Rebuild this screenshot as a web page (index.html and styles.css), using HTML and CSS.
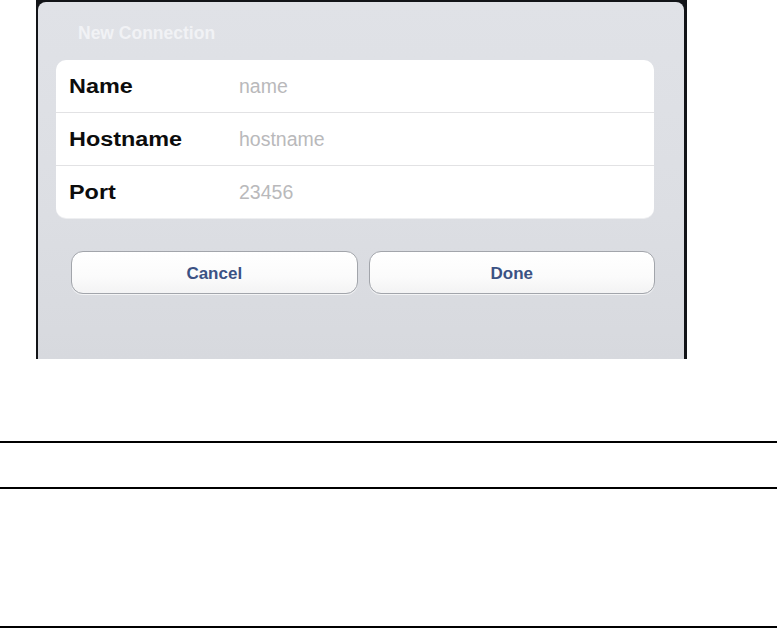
FILE: index.html
```html
<!DOCTYPE html>
<html>
<head>
<meta charset="utf-8">
<link rel="stylesheet" href="styles.css">
</head>
<body>
<div class="page">
  <div class="shot">
    <div class="panel">
      <div class="title">New Connection</div>
      <div class="group">
        <div class="row">
          <span class="label">Name</span>
          <span class="value">name</span>
        </div>
        <div class="row">
          <span class="label">Hostname</span>
          <span class="value">hostname</span>
        </div>
        <div class="row">
          <span class="label">Port</span>
          <span class="value">23456</span>
        </div>
      </div>
      <div class="buttons">
        <div class="btn">Cancel</div>
        <div class="btn">Done</div>
      </div>
    </div>
  </div>
  <div class="rule rule-1"></div>
  <div class="rule rule-2"></div>
  <div class="rule rule-3"></div>
</div>
</body>
</html>
```

FILE: styles.css
```css
html, body {
  margin: 0;
  padding: 0;
  background: #ffffff;
}

body {
  font-family: "Liberation Sans", Arial, sans-serif;
}

.page {
  width: 777px;
}

.shot {
  margin-left: 36px;
  width: 651px;
  height: 359px;
  box-sizing: border-box;
  padding: 2px 3px 0 2px;
  background: #121418;
}

.panel {
  height: 357px;
  box-sizing: border-box;
  border-radius: 8px 8px 0 0;
  background: linear-gradient(#e0e2e7, #dcdee3 60%, #d7d9de);
  padding: 21px 30px 0 18px;
}

.title {
  height: 20px;
  line-height: 20px;
  margin-left: 22px;
  font-size: 17.5px;
  font-weight: bold;
  color: #f1f2f5;
}

.group {
  margin-top: 17px;
  background: #ffffff;
  border-radius: 10px;
  box-shadow: 0 1px 0 rgba(255, 255, 255, 0.5);
}

.row {
  height: 52px;
  display: flex;
  align-items: center;
  padding-left: 13px;
}

.row + .row {
  border-top: 1px solid #e2e2e4;
}

.label {
  width: 170px;
  font-size: 20px;
  font-weight: bold;
  color: #0c0c0c;
  display: inline-block;
  transform: scaleX(1.17);
  transform-origin: left center;
}

.value {
  font-size: 19.5px;
  color: #b9b9bb;
}

.buttons {
  margin-top: 33px;
  margin-left: 15px;
  margin-right: -1px;
  display: flex;
  gap: 11px;
}

.btn {
  flex: 1;
  height: 43px;
  box-sizing: border-box;
  border: 1px solid #a2a5ab;
  border-radius: 12px;
  background: linear-gradient(#ffffff, #fbfbfb 60%, #f3f3f4);
  box-shadow: 0 1px 0 rgba(255, 255, 255, 0.7);
  display: flex;
  align-items: center;
  justify-content: center;
  font-size: 17px;
  font-weight: bold;
  color: #3b5284;
  padding-top: 2px;
}

.rule {
  height: 2px;
  background: #000000;
}

.rule-1 {
  margin-top: 82px;
}

.rule-2 {
  margin-top: 44px;
}

.rule-3 {
  margin-top: 137px;
}
```
